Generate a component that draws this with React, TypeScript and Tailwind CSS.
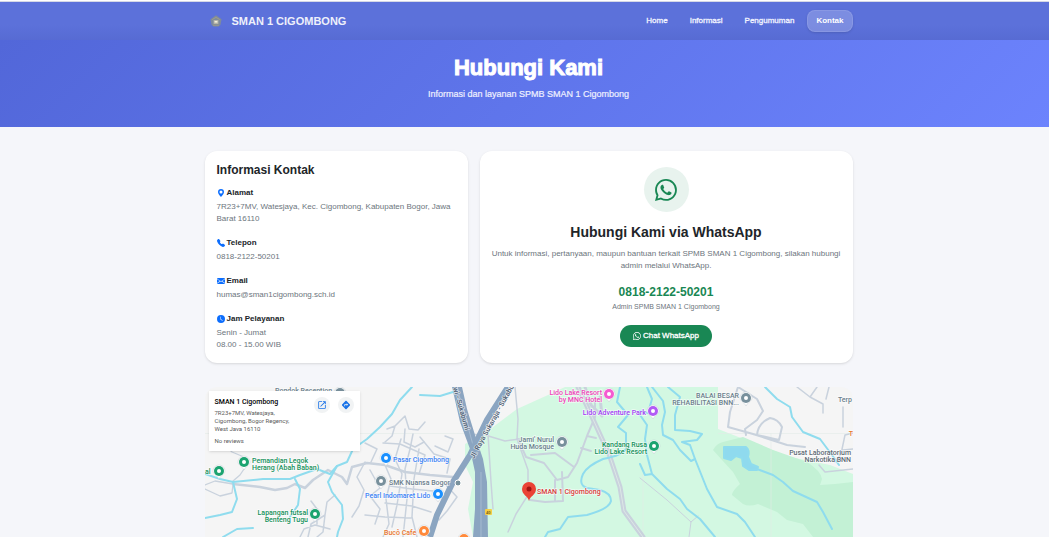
import React from 'react';
import { BsClockFill, BsEnvelopeFill, BsGeoAltFill, BsTelephoneFill, BsWhatsapp } from 'react-icons/bs';
import { MdDirections, MdOpenInNew } from 'react-icons/md';

const navLinks = ['Home', 'Informasi', 'Pengumuman', 'Kontak'];

const contacts = [
    { icon: BsGeoAltFill, label: 'Alamat', lines: ['7R23+7MV, Watesjaya, Kec. Cigombong, Kabupaten Bogor, Jawa Barat 16110'] },
    { icon: BsTelephoneFill, label: 'Telepon', lines: ['0818-2122-50201'] },
    { icon: BsEnvelopeFill, label: 'Email', lines: ['humas@sman1cigombong.sch.id'] },
    { icon: BsClockFill, label: 'Jam Pelayanan', lines: ['Senin - Jumat', '08.00 - 15.00 WIB'] },
];

const SchoolLogo: React.FC = () => (
    <svg viewBox="0 0 12 12" className="h-3 w-3" aria-hidden="true">
        <path d="M6 .2 11.6 4.2 10.4 10 8.5 11.6h-5L1.6 10 .4 4.2Z" fill="#7e8b9c" />
        <path d="M2.2 4.6 6 2.4l3.8 2.2" fill="none" stroke="#a59f86" strokeWidth=".9" />
        <rect x="3.6" y="5" width="4.8" height="4" fill="#b5b4a8" />
        <rect x="4.6" y="6" width="2.8" height="1.6" fill="#f1eedc" />
        <path d="M3 10.2h6" stroke="#a59f86" strokeWidth=".8" />
    </svg>
);

const Navbar: React.FC = () => (
    <nav className="border-t border-[#d5d8e6] bg-linear-to-b from-[#5c71da] from-60% to-[#576bd3] pl-2">
        <div className="mx-auto flex h-[38px] max-w-[648px] items-center justify-between pl-[5px]">
            <a href="#home" className="flex items-center gap-[10px] text-[11px] leading-4 font-bold text-[#eef0fb]">
                <SchoolLogo />
                SMAN 1 CIGOMBONG
            </a>
            <div className="flex items-center gap-1 text-[8px] leading-3">
                {navLinks.map((name) => (
                    <a
                        key={name}
                        href={`#${name.toLowerCase()}`}
                        className={
                            name === 'Kontak'
                                ? 'rounded-lg border border-white/10 bg-white/20 px-2 py-1 font-bold text-white shadow-sm'
                                : 'px-[9px] py-1 font-medium text-[#f2f4ff] [-webkit-text-stroke:0.3px]'
                        }
                    >
                        {name}
                    </a>
                ))}
            </div>
        </div>
    </nav>
);

interface PinProps {
    x: number;
    y: number;
    color: string;
}

const Pin: React.FC<PinProps> = ({ x, y, color }) => (
    <g>
        <path
            d={`M${x - 6} ${y}a6 6 0 1 1 12 0c0 3-4 4-6 8c-2-4-6-5-6-8Z`}
            fill="#fff"
            stroke="#b9c2c9"
            strokeWidth=".4"
        />
        <circle cx={x} cy={y} r="5" fill={color} />
        <circle cx={x} cy={y} r="2" fill="#fff" />
    </g>
);

const green = '#16915b';
const blue = '#3b82f6';
const slate = '#6b7f8c';

const places = [
    { x: 70, y: 6, anchor: 'start', color: slate, lines: ['Pondok Reception'] },
    { x: 47, y: 76, anchor: 'start', color: green, lines: ['Pemandian Legok', 'Herang (Abah Baban)'] },
    { x: 0, y: 87, anchor: 'start', color: green, lines: ['al'] },
    { x: 103, y: 128, anchor: 'end', color: green, lines: ['Lapangan futsal', 'Benteng Tugu'] },
    { x: 188, y: 75, anchor: 'start', color: blue, lines: ['Pasar Cigombong'] },
    { x: 184, y: 98, anchor: 'start', color: slate, lines: ['SMK Nuansa Bogor'] },
    { x: 160, y: 111, anchor: 'start', color: blue, lines: ['Pearl Indomaret Lido'] },
    { x: 179, y: 148, anchor: 'start', color: '#e8762d', lines: ['Bucô Cafe'] },
    { x: 397, y: 8, anchor: 'end', color: '#ee45b8', lines: ['Lido Lake Resort', 'by MNC Hotel'] },
    { x: 441, y: 28, anchor: 'end', color: '#a142f4', lines: ['Lido Adventure Park'] },
    { x: 349, y: 55, anchor: 'end', color: slate, lines: ["Jami' Nurul", 'Huda Mosque'] },
    { x: 442, y: 60, anchor: 'end', color: green, lines: ['Kandang Rusa', 'Lido Lake Resort'] },
    { x: 534, y: 11, anchor: 'end', color: slate, lines: ['BALAI BESAR', 'REHABILITASI BNN...'] },
    { x: 646, y: 68, anchor: 'end', color: '#5f6b75', lines: ['Pusat Laboratorium', 'Narkotika BNN'] },
    { x: 647, y: 15, anchor: 'end', color: slate, lines: ['Terp'] },
] as const;

const pins: PinProps[] = [
    { x: 135, y: 6, color: '#78909c' },
    { x: 39, y: 75, color: '#1ba370' },
    { x: 14, y: 84, color: '#1ba370' },
    { x: 110, y: 127, color: '#1ba370' },
    { x: 181, y: 71, color: '#1a90ff' },
    { x: 176, y: 94, color: '#78909c' },
    { x: 233, y: 107, color: '#1a90ff' },
    { x: 219, y: 144, color: '#ff8a3c' },
    { x: 259, y: 152, color: '#ff8a3c' },
    { x: 404, y: 7, color: '#f45bd0' },
    { x: 448, y: 24, color: '#b15cf5' },
    { x: 357, y: 55, color: '#78909c' },
    { x: 449, y: 59, color: '#1ba370' },
    { x: 541, y: 11, color: '#78909c' },
];

const MapDrawing: React.FC = () => (
    <svg viewBox="0 0 648 150" className="block w-full" role="img" aria-label="Peta lokasi SMAN 1 Cigombong">
        <rect width="648" height="150" fill="#f5f5f5" />

        {/* Park and forest */}
        <path d="M260 57 280 46 312 22 343 8 360 0H513V42L585 70 625 78 648 87V150H268L263 122 268 95 260 78Z" fill="#d3f8e2" />
        <path d="M508 63Q512 56 518 55L538 50 568 63 602 75Q616 84 617 92L615 98 630 97 648 95V150H608L598 137 582 133 572 125 553 117Q544 120 538 117L527 108Q527 104 535 97L528 85 517 73Z" fill="#c3f1d5" />
        <path d="M0 46.500H260M513 46.500H648M566 46.500V150M438 87V150" stroke="#e2ebe7" strokeWidth=".6" />

        {/* Small streets */}
        <g fill="none" stroke="#c9d2dd" strokeWidth="2" strokeLinejoin="round" strokeLinecap="round">
            <path d="M0 98 10 94 28 97 27 106 15 109 0 102M28 94 35 88 39 82M20 58 27 65 39 70" strokeWidth="1.300" />
            <path d="M28 97 55 100 70 103 82 101 90 97 100 101 108 93 123 83 137 90 142 97 147 80 162 76 180 78 200 85 225 88 248 90" strokeWidth="2.500" />
            <path d="M103 150 106 137 120 128 122 115 130 108M120 128 118 145 112 150M95 150 99 142 110 138 125 142M106 114 112 122 112 137" strokeWidth="1.500" />
            <path d="M160 75 152 90 159 103 154 119 147 130M165 83 175 101 165 109 175 122 170 137M180 78 186 92 181 112 184 137 178 150M196 52 190 72 197 87 192 118 187 140M208 47 205 62 200 82 202 112 198 150M214 62 209 92 207 130 212 150M178 56 195 57 220 68 214 87M160 56 172 62 166 75M185 99 207 102 228 104M180 116 207 119 226 125M160 128 180 130 206 131M240 97 252 110 242 124 234 133M215 50 229 67 245 72 242 86M230 59 243 65 248 52 240 49" strokeWidth="1.500" />
            <path d="M182 42 190 39 200 29 204 42 213 43 220 35M200 42 199 55 210 60 219 55M190 39 187 49 180 55" strokeWidth="1.500" />
            <path d="M262 47 280 48 300 54 315 52M283 47 286 95 288 122M310 0 313 32 312 52 323 83 323 108 311 127 303 145" strokeWidth="1.500" />
            <path d="M313 52 321 70 339 76 352 93 363 90 372 76 382 49 390 30 390 10M326 68 350 66 369 80M325 113 340 115 358 114 357 85M350 93V114M382 49 391 51M376 61 386 64" />
            <path d="M373 0 387 30 404 67 415 100 419 124 438 150" strokeWidth="5" />
            <path d="M373 0 387 30 404 67 415 100 419 124 438 150" stroke="#dce7e5" strokeWidth="1" />
            <path d="M380 0 386 18 397 29 395 10" strokeWidth="3" />
            <path d="M533 0 525 25 523 40 548 47 582 58 600 60M533 0 552 12 558 24 552 33 540 42 541 48M565 31Q573 32 577 40L574 53 552 48Q553 36 565 31" />
            <path d="M592 0 605 10 618 17 618 26M605 10 612 0M624 0 621 12M638 40V20M638 63 648 62M648 46 640 48 636 67 630 75M614 78 620 85 648 82" strokeWidth="1.500" />
            <path d="M435 91 462 113 486 135 484 150M486 135 493 129" strokeWidth="1" />
        </g>

        {/* Rivers and lake */}
        <g fill="none" stroke="#8fdcee" strokeWidth="2" strokeLinejoin="round" strokeLinecap="round">
            <path d="M207 0 195 13 187 27 175 40 162 52 148 62 142 75 132 79 125 87 112 82 95 88 85 92 58 92 28 95 15 92 0 87" />
            <path d="M90 92 95 102 93 118 85 130M28 95 32 112 27 125 15 128 0 131M132 79 123 95 127 105 137 118 138 132 133 145 132 150M18 150 32 142 48 141M215 8 235 9 248 5" />
            <path d="M415 0 412 15 423 28 413 40 421 46 421 62Q418 68 398 72 382 79 378 87 373 98 382 101L395 103Q406 106 406 114 404 122 382 128L363 130 355 142 343 145 340 150" />
            <path d="M463 0 475 10 470 28 470 43 485 44 497 47 492 53 477 55 485 58 490 72 502 102 512 120 532 127 540 135 550 150" />
            <path d="M447 0 458 14 460 25 457 38 458 48 468 53 475 63 486 74 490 72M442 0 447 12 443 26 435 24M435 28 442 38 440 52 442 68 447 87 462 102 475 112 482 122 495 132 510 150M435 77 440 88 447 87" />
            <path d="M560 0 572 12 585 20 587 30 598 45 615 52 627 68 634 78M552 82 568 88 578 95 588 104 612 115 618 125 627 142" />
            <path d="M519 60H541Q545 63 543 70L546 77 553 80 552 83H544L538 79 537 71 531 69 526 73 519 71Z" fill="#8fdaee" />
        </g>

        {/* Main roads */}
        <path d="M247 0 255 35 265 62 270 85 270 122 268 150H283L282 95 278 72 270 48 262 22 257 0Z" fill="#8ba5c1" />
        <path d="M276 85V150M252 0 268 58" stroke="#a5bad0" strokeWidth="1" fill="none" />
        <path d="M303 0 282 33 265 68 248 95 232 128 225 150" fill="none" stroke="#8ba5c1" strokeWidth="6" />
        <rect x="280" y="122" width="7" height="6" rx="1" fill="#f5cf46" />

        {/* Labels */}
        <g fontFamily="Roboto, sans-serif" fontSize="7" fontWeight="500" stroke="#fff" strokeWidth="1.500" strokeOpacity=".6" paintOrder="stroke">
            {places.map((place) => (
                <text key={place.lines[0]} textAnchor={place.anchor} fill={place.color}>
                    {place.lines.map((line, i) => (
                        <tspan key={line} x={place.x} y={place.y + i * 7}>{line}</tspan>
                    ))}
                </text>
            ))}
            <text x="332" y="107" fill="#d93a3a">SMAN 1 Cigombong</text>
            <text transform="translate(248 1) rotate(74)" fill="#4b5b70">wi - Sukabumi</text>
            <text transform="translate(269 72) rotate(-61)" fill="#4b5b70">Jl. Raya Sukaraja - Sukabumi</text>
            <text x="281" y="127" fontSize="4" fill="#5f5317" stroke="none">40</text>
            <text x="648" y="49" textAnchor="end" fill="#e8762d">T</text>
        </g>
        <circle cx="253" cy="96" r="3" fill="#78909c" stroke="#fff" strokeWidth="1" />

        {pins.map((pin) => (
            <Pin key={`${pin.x}-${pin.y}`} {...pin} />
        ))}
        <path d="M324 114C323 109 317 108 317 102a7 7 0 0 1 14 0C331 108 325 109 324 114Z" fill="#ea4335" />
        <circle cx="324" cy="102" r="2.500" fill="#a31512" />
    </svg>
);

const PlaceCard: React.FC = () => (
    <div className="absolute top-1 left-1 flex w-[151px] justify-between bg-white p-[6px] font-['Roboto',sans-serif] text-[6px] leading-2 text-[#5b5b5b] shadow">
        <div>
            <h3 className="mb-[2px] text-[7px] leading-[10px] font-medium text-black">SMAN 1 Cigombong</h3>
            <p>7R23+7MV, Watesjaya,</p>
            <p>Cigombong, Bogor Regency,</p>
            <p>West Java 16110</p>
            <p className="mt-1">No reviews</p>
        </div>
        <div className="flex gap-2">
            <a href="#peta" aria-label="Buka peta" className="flex h-4 w-4 items-center justify-center rounded-full bg-[#f1f3f4] text-[#1a73e8]">
                <MdOpenInNew size={10} />
            </a>
            <a href="#rute" aria-label="Petunjuk arah" className="flex h-4 w-4 items-center justify-center rounded-full bg-[#f1f3f4] text-[#1a73e8]">
                <MdDirections size={10} />
            </a>
        </div>
    </div>
);

const App: React.FC = () => (
    <div className="bg-[#f5f6fa] font-['Liberation_Sans',Arial,sans-serif] text-[8px] leading-3 text-[#6c757d]">
        <div className="h-px bg-white" />
        <Navbar />

        {/* Hero */}
        <header className="bg-linear-135 from-[#5267d9] to-[#6c83fd] pt-4 pb-[27px] pl-2 text-center text-white">
            <h1 className="text-[22px] leading-6 font-bold [-webkit-text-stroke:1px]">Hubungi Kami</h1>
            <p className="mt-2 text-[9px] leading-3 text-[#eef0ff] [-webkit-text-stroke:0.2px]">Informasi dan layanan SPMB SMAN 1 Cigombong</p>
        </header>

        <main className="pt-6 pl-2">
            <div className="mx-auto grid max-w-[648px] grid-cols-12 gap-3">
                {/* Contact info */}
                <section className="col-span-5 rounded-xl bg-white p-3 shadow-sm">
                    <h2 className="text-[12px] leading-[14px] font-bold text-[#212529]">Informasi Kontak</h2>
                    <div className="mt-[10px] flex flex-col gap-3">
                        {contacts.map(({ icon: Icon, label, lines }) => (
                            <div key={label}>
                                <h3 className="mb-[2px] flex items-center gap-[2px] font-bold text-[#212529]">
                                    <Icon size={8} className="text-[#0d6efd]" />
                                    {label}
                                </h3>
                                {lines.map((line) => (
                                    <p key={line}>{line}</p>
                                ))}
                            </div>
                        ))}
                    </div>
                </section>

                {/* WhatsApp */}
                <section className="col-span-7 flex flex-col items-center rounded-xl bg-white px-3 py-4 text-center shadow-sm">
                    <div className="flex h-[45px] w-[45px] items-center justify-center rounded-full bg-[#e8f3ee] text-[#198754]">
                        <BsWhatsapp size={22} />
                    </div>
                    <h2 className="mt-3 text-[14px] leading-4 font-bold text-[#212529]">Hubungi Kami via WhatsApp</h2>
                    <p className="mt-2">
                        Untuk informasi, pertanyaan, maupun bantuan terkait SPMB SMAN 1 Cigombong, silakan hubungi admin melalui WhatsApp.
                    </p>
                    <p className="mt-3 text-[12px] leading-4 font-bold text-[#198754]">0818-2122-50201</p>
                    <p className="mt-[1px] text-[7px] leading-3">Admin SPMB SMAN 1 Cigombong</p>
                    <a href="#whatsapp" className="mt-3 flex items-center gap-[2px] rounded-full bg-[#198754] px-[13px] py-[5px] text-white [-webkit-text-stroke:0.3px]">
                        <BsWhatsapp size={8} />
                        Chat WhatsApp
                    </a>
                </section>
            </div>

            {/* Map */}
            <section className="relative mx-auto mt-6 max-w-[648px] overflow-hidden rounded-t-xl">
                <MapDrawing />
                <PlaceCard />
            </section>
        </main>
    </div>
);

export default App;
